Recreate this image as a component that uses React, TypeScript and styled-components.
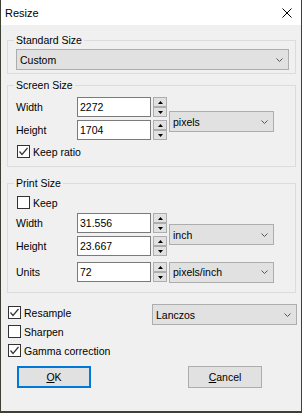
import styled, { createGlobalStyle } from "styled-components";

const GlobalStyle = createGlobalStyle`
  body {
    margin: 0;
    background: #3c4134;
    font-family: "Liberation Sans", Arial, sans-serif;
    font-size: 10.5px;
    color: #000;
  }
`;

const Window = styled.div`
  width: 300px;
  height: 411px;
  margin-left: 1px;
  background: #f0f0f0;
  display: flex;
  flex-direction: column;
`;

const TitleBar = styled.div`
  height: 25px;
  flex-shrink: 0;
  background: #fff;
  display: flex;
  align-items: center;
  justify-content: space-between;
  padding: 0 9px 0 4px;
  font-size: 11px;
`;

const Content = styled.div`
  padding: 9px 5px 0 6px;
  display: flex;
  flex-direction: column;
`;

const Group = styled.fieldset<{ $mt: number; $pt: number; $pb: number }>`
  margin: ${(p) => p.$mt}px 0 0;
  padding: ${(p) => p.$pt}px 6px ${(p) => p.$pb}px 8px;
  border: 1px solid #dcdcdc;
  min-width: 0;
`;

const Legend = styled.legend`
  padding: 0 2px;
  margin-left: -2px;
  line-height: 13px;
`;

const Combo = styled.div<{ $w?: number }>`
  box-sizing: border-box;
  height: 21px;
  width: ${(p) => (p.$w ? `${p.$w}px` : "auto")};
  background: #e1e1e1;
  border: 1px solid #adadad;
  display: flex;
  align-items: center;
  justify-content: space-between;
  padding: 0 5px 0 3px;
`;

const SizeGrid = styled.div<{ $mt: number }>`
  display: grid;
  grid-template-columns: 59px 74px 14px 105px;
  grid-auto-rows: 20px;
  column-gap: 2px;
  row-gap: 3px;
  margin-top: ${(p) => p.$mt}px;
  align-items: center;
`;

const Label = styled.span`
  grid-column: 1;
`;

const Input = styled.div`
  box-sizing: border-box;
  height: 20px;
  background: #fff;
  border: 1px solid #7a7a7a;
  padding-left: 2px;
  display: flex;
  align-items: center;
`;

const SpinBox = styled.div`
  height: 20px;
  display: flex;
  flex-direction: column;
`;

const SpinButton = styled.div`
  box-sizing: border-box;
  flex: 1;
  background: #e1e1e1;
  border: 1px solid #adadad;
  display: flex;
  align-items: center;
  justify-content: center;
`;

const SideCombo = styled(Combo)<{ $row: string; $offset: number }>`
  grid-column: 4;
  grid-row: ${(p) => p.$row};
  align-self: center;
  margin-top: ${(p) => p.$offset}px;
`;

const CheckRow = styled.label<{ $mt: number; $ml?: number }>`
  display: flex;
  align-items: center;
  gap: 3px;
  height: 13px;
  margin-top: ${(p) => p.$mt}px;
  margin-left: ${(p) => p.$ml ?? 1}px;
`;

const Box = styled.span`
  box-sizing: border-box;
  width: 13px;
  height: 13px;
  background: #fff;
  border: 1px solid #333;
  display: flex;
  align-items: center;
  justify-content: center;
`;

const Bottom = styled.div`
  display: flex;
  justify-content: space-between;
  align-items: flex-start;
  margin-top: 11px;
`;

const Checks = styled.div`
  display: flex;
  flex-direction: column;
  padding-top: 2px;
`;

const Buttons = styled.div`
  display: flex;
  gap: 97px;
  margin-top: 9px;
  padding-left: 10px;
`;

const Button = styled.div<{ $default?: boolean }>`
  box-sizing: border-box;
  width: 74px;
  height: 22px;
  background: #e1e1e1;
  border: ${(p) => (p.$default ? "2px solid #0078d7" : "1px solid #adadad")};
  display: flex;
  align-items: center;
  justify-content: center;
`;

const Chevron = () => (
  <svg width="7" height="4" viewBox="0 0 7 4">
    <polyline points="0.5,0.5 3.5,3.5 6.5,0.5" fill="none" stroke="#555" strokeWidth="1" />
  </svg>
);

const Close = () => (
  <svg width="10" height="10" viewBox="0 0 10 10">
    <path d="M0.5 0.5 L9.5 9.5 M9.5 0.5 L0.5 9.5" stroke="#000" strokeWidth="1" />
  </svg>
);

const Spinner = () => (
  <SpinBox>
    <SpinButton>
      <svg width="5" height="3" viewBox="0 0 5 3">
        <path d="M2.5 0 L5 3 L0 3 Z" fill="#000" />
      </svg>
    </SpinButton>
    <SpinButton>
      <svg width="5" height="3" viewBox="0 0 5 3">
        <path d="M0 0 L5 0 L2.5 3 Z" fill="#000" />
      </svg>
    </SpinButton>
  </SpinBox>
);

const Check = ({ checked, label, mt, ml }: { checked: boolean; label: string; mt: number; ml?: number }) => (
  <CheckRow $mt={mt} $ml={ml}>
    <Box>
      {checked && (
        <svg width="11" height="11" viewBox="0 0 11 11">
          <polyline points="1.5,5.5 4,8.5 9.5,2" fill="none" stroke="#333" strokeWidth="1.2" />
        </svg>
      )}
    </Box>
    <span>{label}</span>
  </CheckRow>
);

const NumberRow = ({ label, value }: { label: string; value: string }) => (
  <>
    <Label>{label}</Label>
    <Input>{value}</Input>
    <Spinner />
  </>
);

export default function App() {
  return (
    <>
      <GlobalStyle />
      <Window>
        <TitleBar>
          <span>Resize</span>
          <Close />
        </TitleBar>
        <Content>
          <Group $mt={0} $pt={2} $pb={3}>
            <Legend>Standard Size</Legend>
            <Combo>
              <span>Custom</span>
              <Chevron />
            </Combo>
          </Group>

          <Group $mt={5} $pt={0} $pb={8}>
            <Legend>Screen Size</Legend>
            <SizeGrid $mt={5}>
              <NumberRow label="Width" value="2272" />
              <NumberRow label="Height" value="1704" />
              <SideCombo $row="1 / 3" $offset={6}>
                <span>pixels</span>
                <Chevron />
              </SideCombo>
            </SizeGrid>
            <Check checked label="Keep ratio" mt={5} />
          </Group>

          <Group $mt={10} $pt={0} $pb={10}>
            <Legend>Print Size</Legend>
            <Check checked={false} label="Keep" mt={6} />
            <SizeGrid $mt={4}>
              <NumberRow label="Width" value="31.556" />
              <NumberRow label="Height" value="23.667" />
              <SideCombo $row="1 / 3" $offset={0}>
                <span>inch</span>
                <Chevron />
              </SideCombo>
            </SizeGrid>
            <SizeGrid $mt={6}>
              <NumberRow label="Units" value="72" />
              <SideCombo $row="1" $offset={0}>
                <span>pixels/inch</span>
                <Chevron />
              </SideCombo>
            </SizeGrid>
          </Group>

          <Bottom>
            <Checks>
              <Check checked label="Resample" mt={0} />
              <Check checked={false} label="Sharpen" mt={6} />
              <Check checked label="Gamma correction" mt={6} />
            </Checks>
            <Combo $w={145} style={{ marginRight: -1 }}>
              <span>Lanczos</span>
              <Chevron />
            </Combo>
          </Bottom>

          <Buttons>
            <Button $default>
              <span>
                <u>O</u>K
              </span>
            </Button>
            <Button>
              <span>
                <u>C</u>ancel
              </span>
            </Button>
          </Buttons>
        </Content>
      </Window>
    </>
  );
}
